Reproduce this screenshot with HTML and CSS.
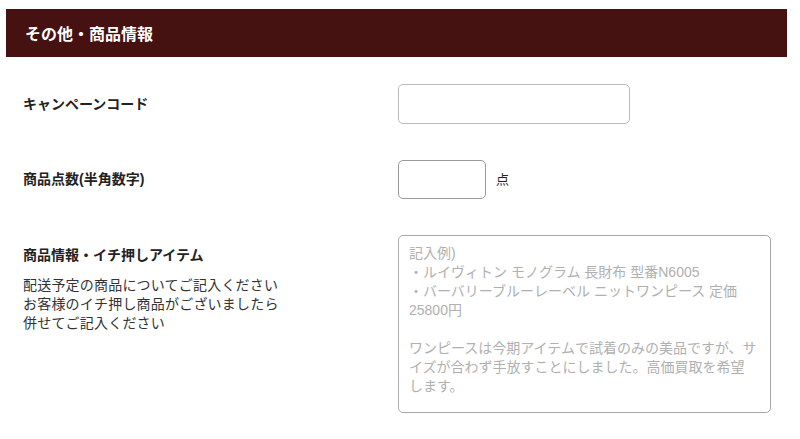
FILE: index.html
```html
<!DOCTYPE html>
<html>
<head>
  <meta charset="utf-8">
  <title>その他・商品情報</title>
  <link rel="stylesheet" href="styles.css">
</head>
<body>
  <section class="form-section">
    <h2 class="section-title">その他・商品情報</h2>

    <div class="form-grid">
      <div class="field-label center">
        <label for="campaign">キャンペーンコード</label>
      </div>
      <div class="field-input center">
        <input type="text" id="campaign" class="input-wide">
      </div>

      <div class="field-label center">
        <label for="count">商品点数(半角数字)</label>
      </div>
      <div class="field-input center">
        <input type="text" id="count" class="input-short">
        <span class="unit">点</span>
      </div>

      <div class="field-label top">
        <label for="items">商品情報・イチ押しアイテム</label>
        <p class="note">配送予定の商品についてご記入ください<br>お客様のイチ押し商品がございましたら<br>併せてご記入ください</p>
      </div>
      <div class="field-input">
        <textarea id="items" placeholder="記入例)&#10;・ルイヴィトン モノグラム 長財布 型番N6005&#10;・バーバリーブルーレーベル ニットワンピース 定価&#10;25800円&#10;&#10;ワンピースは今期アイテムで試着のみの美品ですが、サ&#10;イズが合わず手放すことにしました。高価買取を希望&#10;します。"></textarea>
      </div>
    </div>
  </section>
</body>
</html>
```

FILE: styles.css
```css
body { margin: 0; background: #fff; color: #222; font-family: "Liberation Sans", "Noto Sans CJK JP", sans-serif; }
.form-section { width: 781px; margin: 9px 0 0 6px; }
.section-title { margin: 0; height: 48px; padding-left: 19px; display: flex; align-items: center; background: #461111; color: #fff; font-size: 16px; font-weight: bold; }
.form-grid { display: grid; grid-template-columns: 375px 373px; row-gap: 36px; padding: 27px 0 0 17px; }
.field-label { font-size: 14px; }
.field-label label { font-weight: bold; color: #222; line-height: 19px; display: block; }
.field-label.center, .field-input.center { display: flex; align-items: center; }
.field-label.top { padding-top: 11px; }
.note { margin: 11px 0 0; color: #333; font-size: 14px; line-height: 19px; letter-spacing: 0.2px; }
.field-input { display: flex; }
input { height: 40px; box-sizing: border-box; border-radius: 5px; font-size: 14px; padding: 0 10px; }
.input-wide { width: 232px; border: 1px solid #bbb; }
.input-short { width: 88px; height: 39px; border: 1px solid #9a9a9a; }
.unit { margin-left: 10px; padding-bottom: 3px; font-size: 13px; color: #222; }
textarea { width: 373px; height: 178px; box-sizing: border-box; border: 1px solid #aaa; border-radius: 5px; padding: 8px 4px 6px 10px; font-family: inherit; font-size: 14px; line-height: 19px; resize: none; }
textarea::placeholder { color: #b0b0b0; }
```
